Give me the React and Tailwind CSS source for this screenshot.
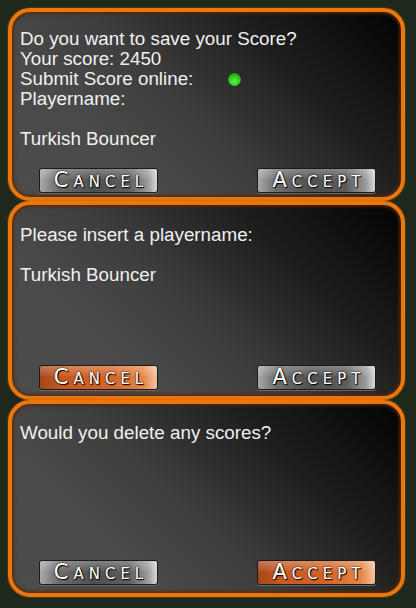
import React from "react";

function Btn({ label, orange }) {
  return (
    <div
      className={
        "w-[119px] h-[25px] rounded-[3px] border border-[#1a1a1a] shadow-[0_1px_0_#6a6a6a] flex items-center justify-center relative overflow-hidden " +
        (orange
          ? "bg-[linear-gradient(90deg,#a8461a_0%,#c9581f_20%,#d56426_60%,#e58647_88%,#f4c2a0_100%)]"
          : "bg-[linear-gradient(90deg,#a9a9a9_0%,#6e6e6e_15%,#505050_45%,#5c5c5c_75%,#9a9a9a_92%,#d8d8d8_100%)]")
      }
    >
      <div className="absolute inset-x-0 top-0 h-[45%] bg-[linear-gradient(180deg,rgba(255,255,255,0.28),rgba(255,255,255,0.05))]" />
      <span
        className="relative pl-[5px] text-white text-[21px] leading-none tracking-[5px] [font-variant:small-caps] font-['DejaVu_Sans',sans-serif] [text-shadow:0_0_2px_#000,1px_1px_1px_#000]"
      >
        {label}
      </span>
    </div>
  );
}

function Panel({ h, pt, pb, children, cancelOrange, acceptOrange }) {
  return (
    <div
      className={
        "w-[397px] rounded-[22px] border-[4px] border-[#e8770f] bg-[linear-gradient(225deg,#030303_0%,#1f1f1f_30%,#3e3e3e_55%,#4a4a4a_75%,#4c4c4c_100%)] shadow-[inset_0_0_3px_2px_rgba(90,40,0,0.8),0_0_2px_#b85a08] flex flex-col justify-between " +
        h +
        " " +
        pt +
        " " +
        pb
      }
    >
      <div className="pl-[8px] text-[18.8px] leading-[20px] text-[#f0f0f0] font-['Liberation_Sans',Arial,sans-serif]">
        {children}
      </div>
      <div className="flex justify-between pl-[27px] pr-[25px]">
        <Btn label="Cancel" orange={cancelOrange} />
        <Btn label="Accept" orange={acceptOrange} />
      </div>
    </div>
  );
}

export default function App() {
  return (
    <div className="w-[416px] h-[608px] bg-[#1e281b] pt-[8px] pl-[8px] flex flex-col">
      <Panel h="h-[193px]" pt="pt-[17px]" pb="pb-[4px]">
        <div>Do you want to save your Score?</div>
        <div>Your score: 2450</div>
        <div className="flex items-center">
          <span className="w-[208px]">Submit Score online:</span>
          <span className="w-[13px] h-[13px] rounded-full bg-[radial-gradient(circle_at_50%_65%,#66ee55_0%,#33cc22_45%,#22aa11_68%,#7a8a78_100%)] shadow-[0_0_1px_#000]" />
        </div>
        <div>Playername:</div>
        <div>&nbsp;</div>
        <div>Turkish Bouncer</div>
      </Panel>
      <Panel h="h-[199px]" pt="pt-[20px]" pb="pb-[6px]" cancelOrange>
        <div>Please insert a playername:</div>
        <div>&nbsp;</div>
        <div>Turkish Bouncer</div>
      </Panel>
      <Panel h="h-[197px]" pt="pt-[19px]" pb="pb-[8px]" acceptOrange>
        <div>Would you delete any scores?</div>
      </Panel>
    </div>
  );
}
